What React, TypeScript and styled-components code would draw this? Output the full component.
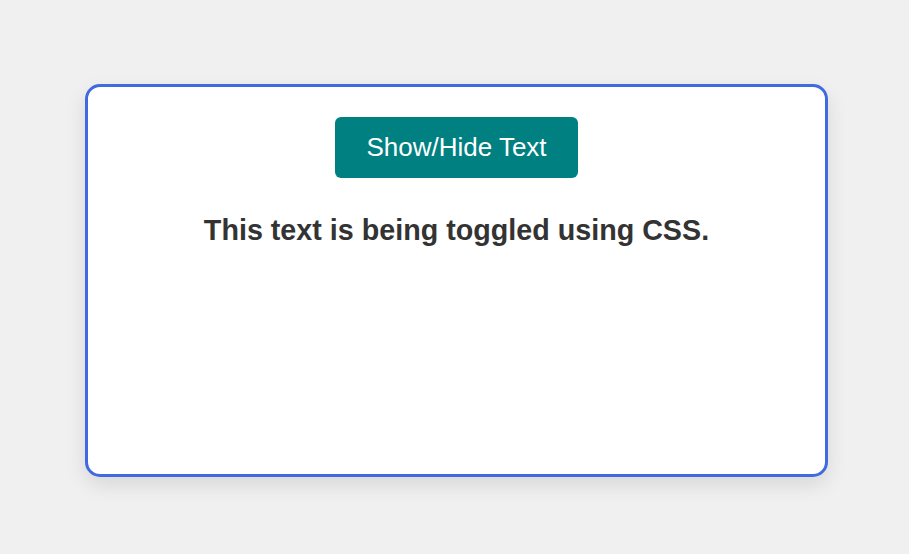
import React, { useState } from 'react';
import styled, { createGlobalStyle } from 'styled-components';

const GlobalStyle = createGlobalStyle`
    html, body {
        margin: 0;
        padding: 0;
        background-color: #f0f0f0;
        font-family: "Liberation Sans", Arial, sans-serif;
    }
`

const Page = styled.main`
    min-height: 554px;
    box-sizing: border-box;
    display: flex;
    justify-content: center;
    align-items: flex-start;
    padding: 84px 0 0 4px;
`

const Card = styled.section`
    width: 743px;
    height: 393px;
    box-sizing: border-box;
    background-color: #ffffff;
    border: 3px solid #4169e1;
    border-radius: 15px;
    box-shadow: 0 8px 20px rgba(0, 0, 0, 0.1);
    padding: 30px 20px;
    display: flex;
    flex-direction: column;
    align-items: center;
`

const ToggleButton = styled.button`
    width: 243px;
    height: 61px;
    background-color: #008080;
    color: #ffffff;
    border: none;
    border-radius: 6px;
    font-family: "Liberation Sans", Arial, sans-serif;
    font-size: 26px;
    cursor: pointer;
`

const Message = styled.p<{ $visible: boolean }>`
    margin: 36px 0 0;
    font-size: 28.7px;
    font-weight: 700;
    color: #333333;
    visibility: ${({ $visible }) => ($visible ? 'visible' : 'hidden')};
`

export default function App() {
    const [visible, setVisible] = useState(true);

    return (
        <>
            <GlobalStyle />
            <Page>
                <Card>
                    <ToggleButton onClick={() => setVisible(v => !v)}>Show/Hide Text</ToggleButton>
                    <Message $visible={visible}>This text is being toggled using CSS.</Message>
                </Card>
            </Page>
        </>
    );
}
